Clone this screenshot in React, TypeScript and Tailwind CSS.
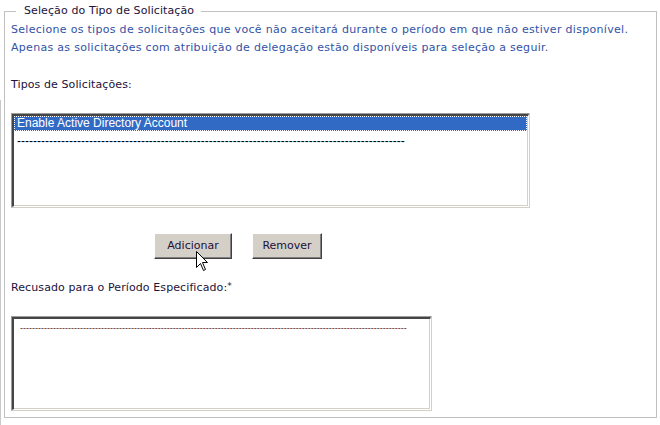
const dark = "text-[#22113a]";

function ListBox({
  width,
  children,
}: {
  width: string;
  children: React.ReactNode;
}) {
  return (
    <div
      className={`${width} h-[95px] border border-t-[#9c9c9c] border-l-[#9c9c9c] border-b-[#d4d0c8] border-r-[#d4d0c8]`}
    >
      <div className="h-full border-t-2 border-l-2 border-t-[#454545] border-l-[#454545] border-b border-r border-b-white border-r-white">
        <div className="h-full border-b border-r border-b-[#d4d0c8] border-r-[#d4d0c8] bg-white overflow-hidden">
          {children}
        </div>
      </div>
    </div>
  );
}

function Button({ label, width }: { label: string; width: string }) {
  return (
    <button
      type="button"
      className={`${width} h-[26px] bg-[#d4d0c8] border border-t-white border-l-white border-b-[#404040] border-r-[#404040] shadow-[inset_-1px_-1px_0_#808080] text-[11px] ${dark}`}
    >
      {label}
    </button>
  );
}

export default function App() {
  const dashes1 = "-".repeat(97);
  const dashes2 = "-".repeat(129);

  return (
    <div
      className="relative w-[660px] h-[425px] bg-white overflow-hidden"
      style={{ fontFamily: '"DejaVu Sans", sans-serif' }}
    >
      <div className="absolute left-0 top-[100px] bottom-0 w-px bg-[#c8c8c8]" />
      <fieldset className="ml-[4px] mt-[4px] w-[653px] border border-[#c0c0c0] px-[6px] pb-[6px] tracking-[0.3px]">
        <legend className={`ml-[5px] pl-[8px] pr-[7px] text-[11px] leading-[14px] tracking-[0.1px] ${dark}`}>
          Seleção do Tipo de Solicitação
        </legend>
        <p className="mt-[3px] text-[11px] leading-[18px] text-[#3152a6]">
          Selecione os tipos de solicitações que você não aceitará durante o período em que não estiver disponível.
          <br />
          Apenas as solicitações com atribuição de delegação estão disponíveis para seleção a seguir.
        </p>
        <div className={`mt-[19px] text-[11px] leading-[18px] tracking-[0.1px] ${dark}`}>Tipos de Solicitações:</div>

        <div className="mt-[19px]">
          <ListBox width="w-[519px]">
            <div
              className="text-[12px] leading-[15px] text-black tracking-normal"
              style={{ fontFamily: '"Liberation Sans", Arial, sans-serif' }}
            >
              <div className="h-[15px] bg-[#316ac5] text-white border border-dotted border-white pl-[2px] leading-[13px]">
                Enable Active Directory Account
              </div>
              <div className="h-[15px] mt-[3px] pl-[3px] overflow-hidden whitespace-nowrap">{dashes1}</div>
            </div>
          </ListBox>
        </div>

        <div className="mt-[25px] ml-[143px] flex gap-[20px] tracking-normal">
          <Button label="Adicionar" width="w-[78px]" />
          <Button label="Remover" width="w-[70px]" />
        </div>

        <div className={`mt-[20px] text-[11px] leading-[18px] tracking-[0.1px] ${dark}`}>
          Recusado para o Período Especificado:<span className="align-top text-[9px] leading-[14px]">*</span>
        </div>

        <div className="mt-[19px]">
          <ListBox width="w-[421px]">
            <div
              className="pl-[6px] pt-[2px] text-[9px] leading-[15px] text-[#5a1212] whitespace-nowrap overflow-hidden tracking-normal"
              style={{ fontFamily: '"Liberation Sans", Arial, sans-serif' }}
            >
              {dashes2}
            </div>
          </ListBox>
        </div>
      </fieldset>

      <svg
        className="absolute left-[196px] top-[251px]"
        width="13"
        height="21"
        viewBox="0 0 13 21"
      >
        <path
          d="M0.5 0.5 L0.5 16.5 L4.5 12.5 L7.5 19.5 L9.5 18.5 L6.5 11.5 L11.5 11.5 Z"
          fill="white"
          stroke="black"
          strokeWidth="1"
        />
      </svg>
    </div>
  );
}
